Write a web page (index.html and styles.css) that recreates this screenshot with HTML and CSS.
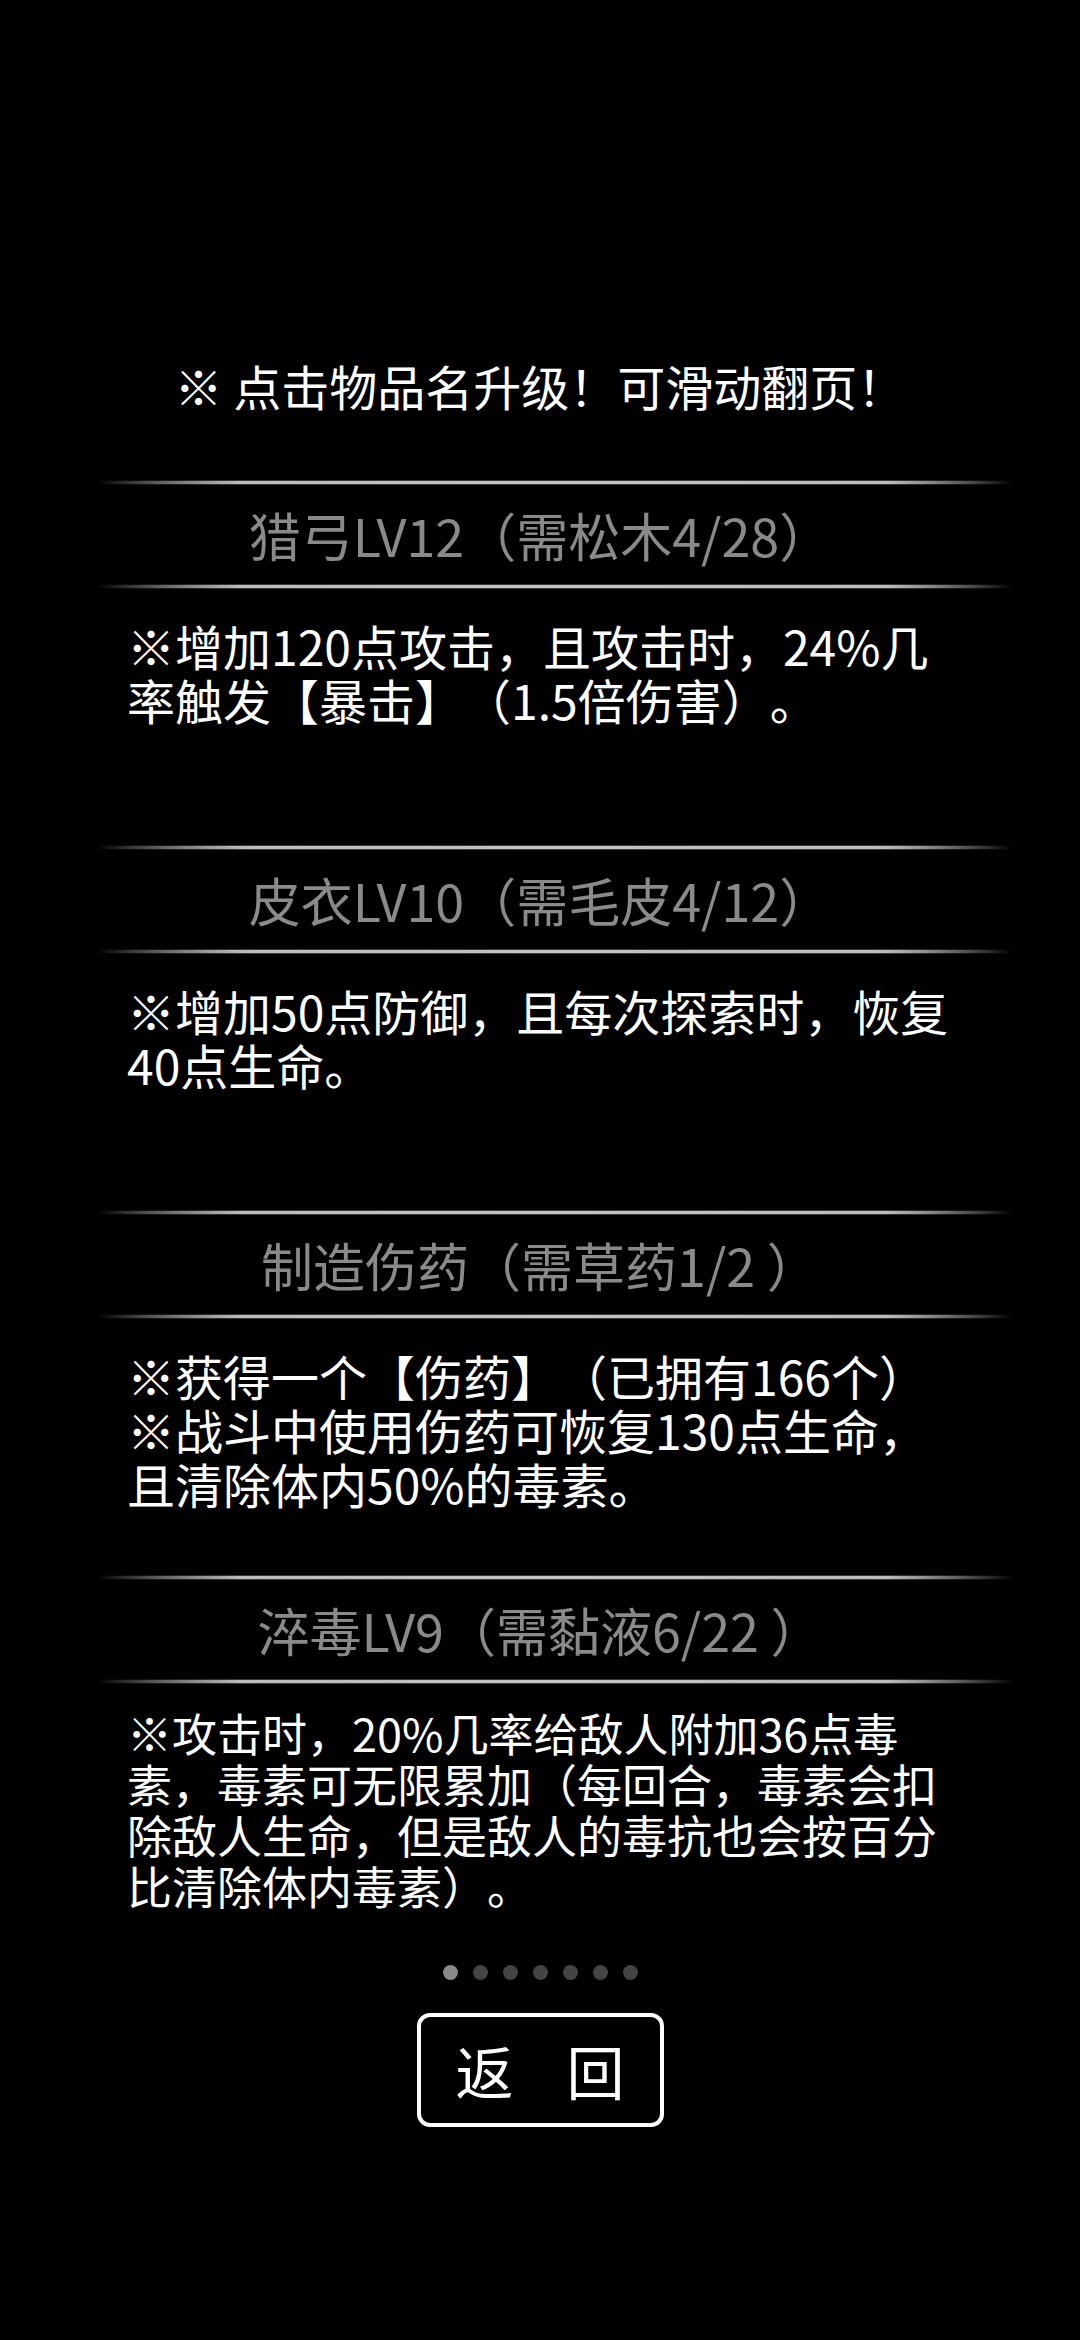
FILE: index.html
```html
<!DOCTYPE html>
<html>
	<head>
		<meta charset="utf-8">
		<title>升级</title>
		<link rel="stylesheet" href="styles.css">
	</head>
	<body>
		<div class="page">
			<p class="tip">※ 点击物品名升级！可滑动翻页！</p>

			<div class="list">
				<div class="item">
					<div class="rule"></div>
					<h2 class="name">猎弓LV12（需松木4/28）</h2>
					<div class="rule"></div>
					<div class="desc">
						<p>※增加120点攻击，且攻击时，24%几</p>
						<p>率触发【暴击】（1.5倍伤害）。</p>
					</div>
				</div>

				<div class="item">
					<div class="rule"></div>
					<h2 class="name">皮衣LV10（需毛皮4/12）</h2>
					<div class="rule"></div>
					<div class="desc">
						<p>※增加50点防御，且每次探索时，恢复</p>
						<p>40点生命。</p>
					</div>
				</div>

				<div class="item">
					<div class="rule"></div>
					<h2 class="name">制造伤药（需草药1/2 ）</h2>
					<div class="rule"></div>
					<div class="desc">
						<p>※获得一个【伤药】（已拥有166个）</p>
						<p>※战斗中使用伤药可恢复130点生命，</p>
						<p>且清除体内50%的毒素。</p>
					</div>
				</div>

				<div class="item">
					<div class="rule"></div>
					<h2 class="name">淬毒LV9（需黏液6/22 ）</h2>
					<div class="rule"></div>
					<div class="desc small">
						<p>※攻击时，20%几率给敌人附加36点毒</p>
						<p>素，毒素可无限累加（每回合，毒素会扣</p>
						<p>除敌人生命，但是敌人的毒抗也会按百分</p>
						<p>比清除体内毒素）。</p>
					</div>
				</div>
			</div>

			<div class="dots">
				<span class="on"></span>
				<span></span>
				<span></span>
				<span></span>
				<span></span>
				<span></span>
				<span></span>
			</div>

			<div class="back">
				<span>返</span>
				<span>回</span>
			</div>
		</div>
	</body>
</html>
```

FILE: styles.css
```css
* {margin: 0; padding: 0;}

body {
	background-color: #000;
	font-family: "Noto Sans CJK SC", "Noto Sans", sans-serif;
	color: #fff;
	text-spacing-trim: space-all;
}

.page {
	padding-top: 355px;
}

.tip {
	height: 60px;
	line-height: 60px;
	font-size: 48px;
	text-align: center;
}

.list {
	margin-top: 65px;
}

.item {
	height: 365px;
}

/* 分隔线：两端渐隐 */
.rule {
	height: 5px;
	margin: 0 67px 0 97px;
	display: flex;
	align-items: center;
	background: linear-gradient(to right, rgba(60, 60, 60, 0), #3a3a3a 16%, #3a3a3a 86%, rgba(60, 60, 60, 0));
}

.rule::after {
	content: "";
	flex: 1;
	height: 3px;
	background: linear-gradient(to right, rgba(190, 190, 190, 0), #bdbdbd 16%, #c4c4c4 50%, #bdbdbd 86%, rgba(190, 190, 190, 0));
}

.name {
	height: 99px;
	line-height: 99px;
	font-size: 52px;
	font-weight: normal;
	text-align: center;
	color: #8a8a8a;
}

.desc {
	padding: 29px 0 0 127px;
	font-size: 48px;
}

.desc p {
	height: 54px;
	line-height: 54px;
	white-space: nowrap;
}

.desc.small {
	padding-top: 23px;
	font-size: 45px;
}

.desc.small p {
	height: 51px;
	line-height: 51px;
}

.dots {
	display: flex;
	justify-content: center;
	gap: 15px;
	margin-top: 25px;
}

.dots span {
	width: 15px;
	height: 15px;
	border-radius: 50%;
	background-color: #444;
}

.dots .on {
	background-color: #8a8a8a;
}

.back {
	box-sizing: border-box;
	width: 247px;
	height: 114px;
	margin: 33px auto 0;
	border: 4px solid #fff;
	border-radius: 13px;
	display: flex;
	align-items: center;
	justify-content: center;
	gap: 53px;
	font-size: 58px;
	line-height: 1;
}
```
